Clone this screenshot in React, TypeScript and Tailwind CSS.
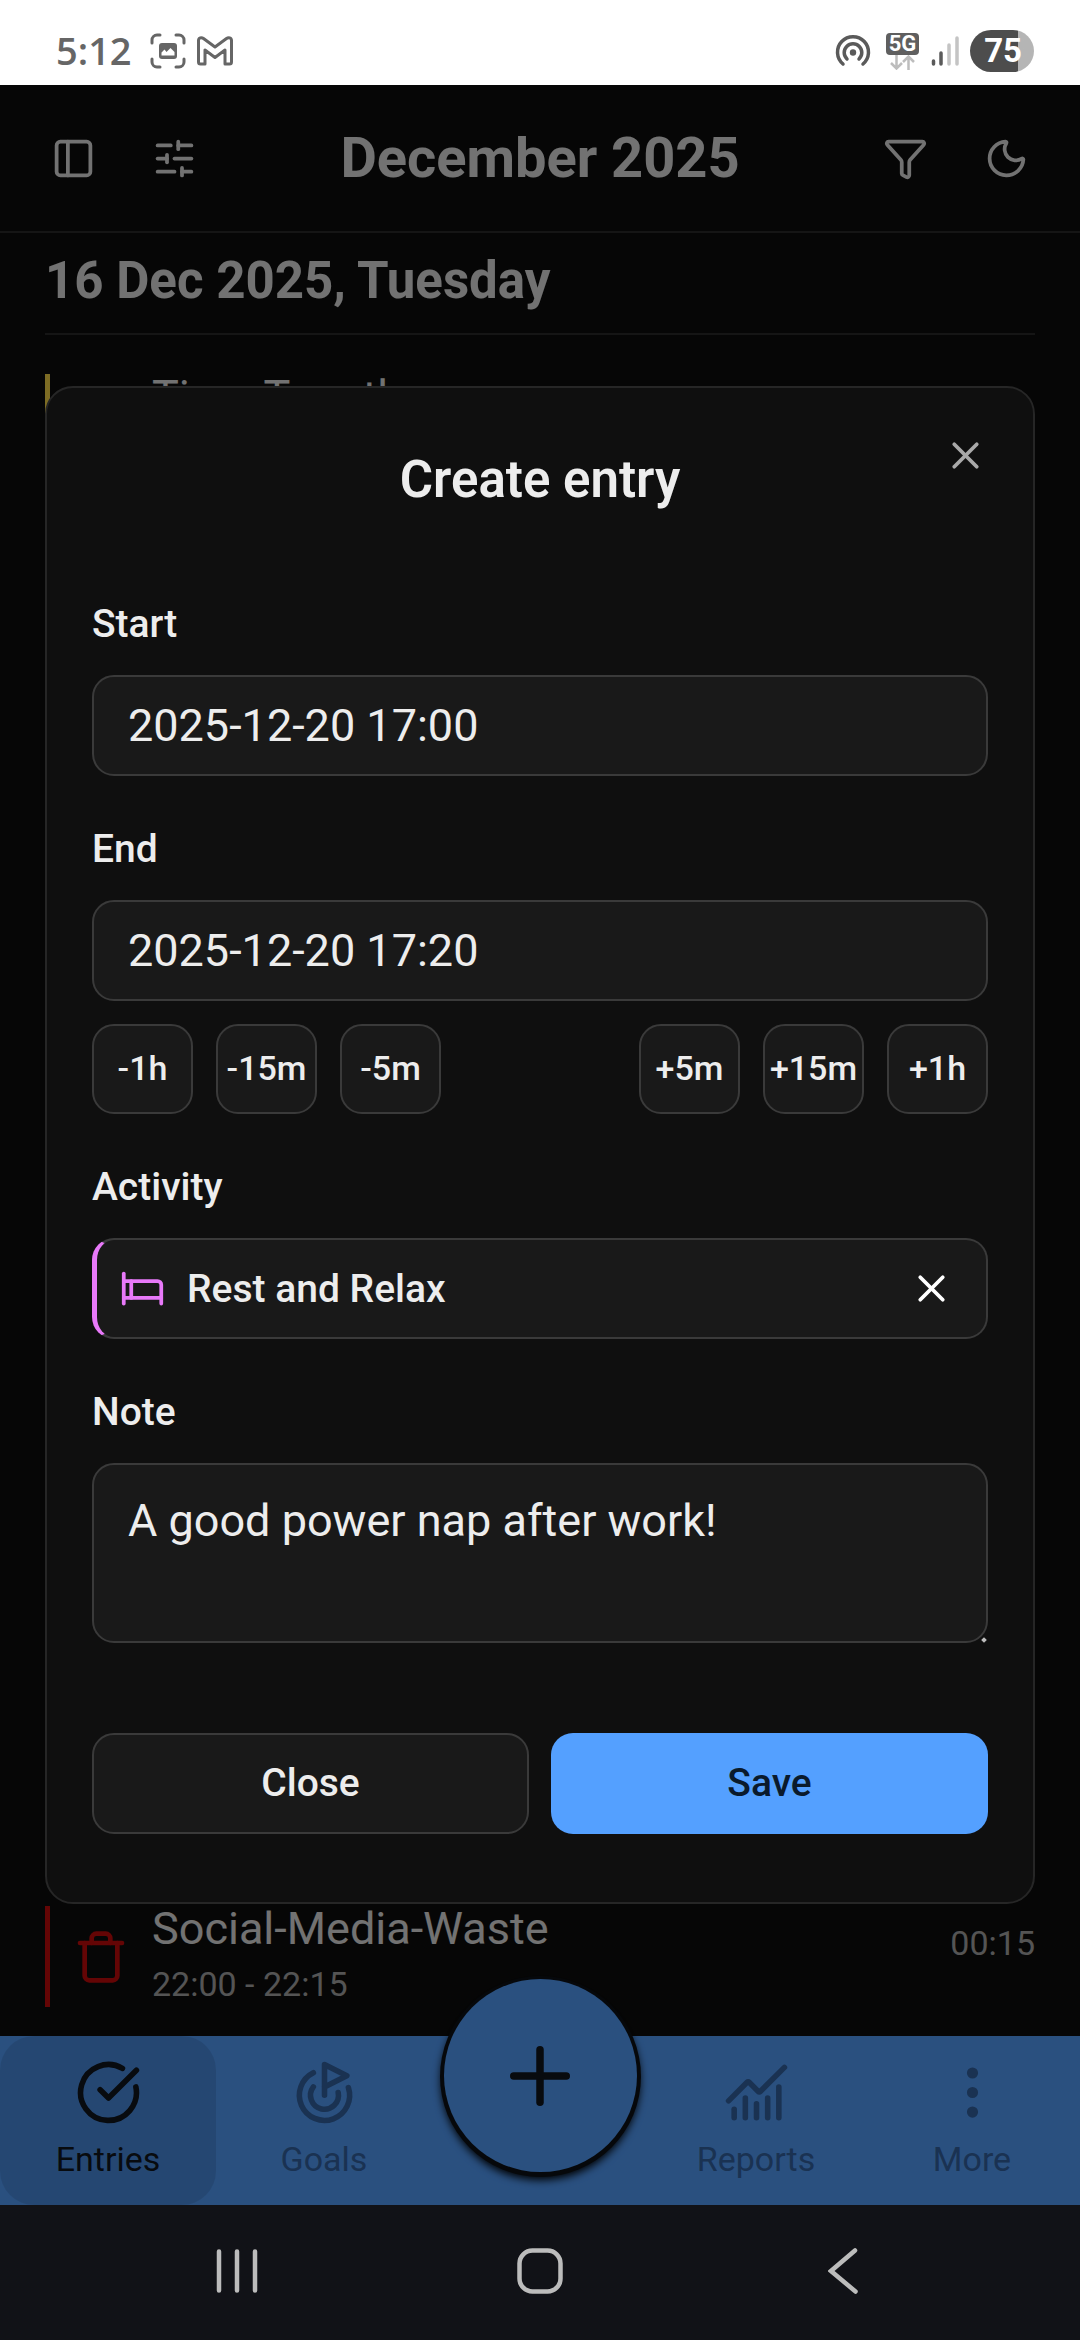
import React, { useState } from "react";
import {
  Bed,
  ChartNoAxesCombined,
  CircleCheckBig,
  EllipsisVertical,
  Funnel,
  Goal,
  Moon,
  PanelLeft,
  Plus,
  SlidersHorizontal,
  Trash,
  X,
} from "lucide-react";

const fieldBox = "w-full rounded-[22px] border-2 border-[#3a3a3a] bg-[#191919] text-[#ededed]";

function StatusBar() {
  return (
    <div className="flex h-[85px] items-center justify-between bg-white pl-[56px] pr-[46px] pt-[17px]">
      <div className="flex items-center">
        <span className="pb-[2px] font-['Open_Sans'] text-[38px] leading-[38px] font-semibold text-[#666666]">5:12</span>
        <svg className="ml-[18px] size-[36px]" viewBox="0 0 36 36" fill="none" stroke="#666666" strokeWidth="3" strokeLinecap="round" aria-hidden="true">
          <path d="M2 10V7a5 5 0 0 1 5-5h3M26 2h3a5 5 0 0 1 5 5v3M34 26v3a5 5 0 0 1-5 5h-3M10 34H7a5 5 0 0 1-5-5v-3" />
          <rect x="9" y="10" width="18" height="16" rx="3" fill="#666666" stroke="none" />
          <path d="M11.500 22.500v-3l3-3 2 2.500 4-4 4 4v3.500z" fill="#ffffff" stroke="none" />
        </svg>
        <svg className="ml-[11px] h-[30px] w-[36px]" viewBox="0 0 36 30" fill="none" stroke="#666666" strokeWidth="3" strokeLinejoin="round" aria-hidden="true">
          <path d="M1.500 26V4.500c0-3 3-3.500 5-2L18 11 29.500 2.500c2-1.500 5-1 5 2V26a2 2 0 0 1-2 2H28V14l-10 7.500L8 14v14H3.500a2 2 0 0 1-2-2z" />
        </svg>
      </div>
      <div className="flex items-center">
        <svg className="size-[36px]" viewBox="0 0 36 36" fill="none" stroke="#5a5a5a" strokeWidth="3.500" strokeLinecap="round" aria-hidden="true">
          <path d="M8 31a15.500 15.500 0 1 1 20 0" />
          <path d="M12 26a8.800 8.800 0 1 1 12 0" />
          <circle cx="18" cy="19.500" r="3.200" fill="#5a5a5a" stroke="none" />
        </svg>
        <div className="ml-[15px] flex flex-col items-center">
          <span className="flex h-[22px] w-[33px] items-center justify-center rounded-[4px] bg-[#5f5f5f] font-[Roboto] text-[22px] leading-[22px] font-bold text-white">5G</span>
          <svg className="h-[15px] w-[25px]" viewBox="0 0 25 15" fill="none" stroke="#bdbdbd" strokeWidth="2.500" aria-hidden="true">
            <path d="M6.500 0v13M1 8l5.500 5.500L12 8M18.500 15V2M13 7l5.500-5.500L24 7" />
          </svg>
        </div>
        <svg className="ml-[12px] h-[30px] w-[28px]" viewBox="0 0 28 30" strokeWidth="3.500" strokeLinecap="round" aria-hidden="true">
          <path d="M2.500 25v3M10 17v11" stroke="#5a5a5a" />
          <path d="M18 9v19M26 2v26" stroke="#c4c4c4" />
        </svg>
        <span className="ml-[11px] flex h-[42px] w-[64px] items-center justify-end rounded-full bg-linear-to-r from-[#4d4d4d] from-75% to-[#b5b5b5] to-75% pr-[12px] font-[Roboto] text-[33px] leading-[42px] font-bold text-white">
          75
        </span>
      </div>
    </div>
  );
}

function HeaderButton({ label, children }: { label: string; children: React.ReactNode }) {
  return (
    <button type="button" aria-label={label} className="flex size-[101px] items-center justify-center">
      {children}
    </button>
  );
}

function Entry({
  title,
  time,
  duration,
  bar,
  icon,
}: {
  title: string;
  time?: string;
  duration?: string;
  bar: string;
  icon?: React.ReactNode;
}) {
  return (
    <li className="flex h-[101px] items-center">
      <span className={`h-full w-[5px] shrink-0 ${bar}`} />
      <span className="mx-[23px] flex size-[56px] shrink-0 items-center justify-center">{icon}</span>
      <div className="flex h-full min-w-0 flex-1 flex-col gap-[11px]">
        <span className="text-[45px] leading-[45px] text-[#e4e4e4]">{title}</span>
        {time && <span className="text-[34px] leading-[45px] text-[#a8a8a8]">{time}</span>}
      </div>
      {duration && <span className="self-start pt-[15px] text-[34px] leading-[45px] text-[#a8a8a8]">{duration}</span>}
    </li>
  );
}

function Tab({ label, active, icon }: { label: string; active?: boolean; icon: React.ReactNode }) {
  return (
    <button
      type="button"
      aria-current={active ? "page" : undefined}
      className={`flex flex-col items-center gap-[11px] rounded-[34px] py-[23px] text-[34px] leading-[45px] ${
        active ? "bg-black/10 text-[#10171f]" : "text-[#3465a5]"
      }`}
    >
      {icon}
      {label}
    </button>
  );
}

function Field({ label, id, children }: { label: string; id: string; children: React.ReactNode }) {
  return (
    <div className="flex flex-col gap-[23px]">
      <label htmlFor={id} className="text-[39px] leading-[56px] font-medium">
        {label}
      </label>
      {children}
    </div>
  );
}

function StepButton({ children }: { children: React.ReactNode }) {
  return (
    <button
      type="button"
      className="flex h-[90px] w-[101px] items-center justify-center rounded-[22px] border-2 border-[#3a3a3a] bg-[#191919] pb-[2px] text-[34px] leading-[45px] font-medium"
    >
      {children}
    </button>
  );
}

function CreateEntryDialog() {
  const [start, setStart] = useState("2025-12-20 17:00");
  const [end, setEnd] = useState("2025-12-20 17:20");
  const [note, setNote] = useState("A good power nap after work!");

  return (
    <form
      role="dialog"
      aria-labelledby="dialog-title"
      className="relative flex w-full flex-col rounded-[28px] border-2 border-[#262626] bg-[#0f0f0f] px-[45px] py-[68px] text-[#ededed]"
    >
      <button type="button" aria-label="Close dialog" className="absolute top-[45px] right-[45px] text-[#a9a9a9]">
        <X className="size-[45px]" />
      </button>
      <h2 id="dialog-title" className="text-center text-[51px] leading-[48px] font-semibold">
        Create entry
      </h2>

      <div className="mt-[92px] flex flex-col gap-[45px]">
        <Field label="Start" id="start">
          <input id="start" value={start} onChange={(e) => setStart(e.target.value)} className={`${fieldBox} h-[101px] px-[34px] text-[45px]`} />
        </Field>

        <Field label="End" id="end">
          <input id="end" value={end} onChange={(e) => setEnd(e.target.value)} className={`${fieldBox} h-[101px] px-[34px] text-[45px]`} />
          <div className="flex justify-between">
            <div className="flex gap-[23px]">
              <StepButton>-1h</StepButton>
              <StepButton>-15m</StepButton>
              <StepButton>-5m</StepButton>
            </div>
            <div className="flex gap-[23px]">
              <StepButton>+5m</StepButton>
              <StepButton>+15m</StepButton>
              <StepButton>+1h</StepButton>
            </div>
          </div>
        </Field>

        <Field label="Activity" id="activity">
          <div className={`${fieldBox} flex h-[101px] items-center border-l-[5px] border-l-[#e879f9] pr-[32px] pl-[23px]`}>
            <button id="activity" type="button" className="flex flex-1 items-center gap-[22px] text-[39px] leading-[56px] font-medium">
              <Bed className="size-[45px] text-[#e879f9]" />
              Rest and Relax
            </button>
            <button type="button" aria-label="Clear activity" className="text-white">
              <X className="size-[45px]" />
            </button>
          </div>
        </Field>

        <Field label="Note" id="note">
          <div className="relative flex">
            <textarea
              id="note"
              value={note}
              onChange={(e) => setNote(e.target.value)}
              className={`${fieldBox} h-[180px] resize-none px-[34px] py-[22px] text-[45px] leading-[68px]`}
            />
            <span className="absolute right-[2px] bottom-[1px] size-[4px] rotate-45 bg-[#bdbdbd]" />
          </div>
        </Field>
      </div>

      <div className="mt-[90px] grid grid-cols-2 gap-[22px]">
        <button type="button" className={`${fieldBox} h-[101px] pb-[2px] text-[39px] leading-[56px] font-medium`}>
          Close
        </button>
        <button type="button" className="h-[101px] rounded-[22px] bg-[#54a0ff] pb-[2px] text-[39px] leading-[56px] font-medium text-[#0a1a2c]">
          Save
        </button>
      </div>
    </form>
  );
}

export default function App() {
  return (
    <div className="flex min-h-screen flex-col bg-[#111217] font-[Roboto,sans-serif]">
      <StatusBar />

      <div className="relative flex flex-1 flex-col bg-[#0d0d0d] text-[#ededed]">
        <header className="flex h-[148px] items-center border-b-2 border-[#2a2a2a] px-[23px] text-[#e4e4e4]">
          <HeaderButton label="Toggle sidebar">
            <PanelLeft className="size-[45px]" />
          </HeaderButton>
          <HeaderButton label="View settings">
            <SlidersHorizontal className="size-[45px]" />
          </HeaderButton>
          <h1 className="flex-1 text-center text-[56px] leading-[68px] font-bold">December 2025</h1>
          <HeaderButton label="Filter">
            <Funnel className="size-[45px]" />
          </HeaderButton>
          <HeaderButton label="Dark mode">
            <Moon className="size-[45px]" />
          </HeaderButton>
        </header>

        <main className="flex flex-1 flex-col px-[45px] pb-[29px]">
          <h2 className="border-b-2 border-[#2a2a2a] pt-[20px] pb-[24px] text-[51px] leading-[56px] font-bold text-[#e4e4e4]">
            16 Dec 2025, Tuesday
          </h2>
          <ul className="flex flex-1 flex-col justify-between pt-[39px]">
            <Entry title="Time Together" bar="bg-[#fad848]" />
            <Entry
              title="Social-Media-Waste"
              time="22:00 - 22:15"
              duration="00:15"
              bar="bg-[#c80a0a]"
              icon={<Trash className="size-[56px] text-[#c80a0a]" />}
            />
          </ul>
        </main>

        <nav className="grid grid-cols-5 bg-[#54a0ff]">
          <Tab label="Entries" active icon={<CircleCheckBig className="size-[67px]" />} />
          <Tab label="Goals" icon={<Goal className="size-[67px]" />} />
          <div className="relative flex justify-center">
            <button
              type="button"
              aria-label="Add entry"
              className="absolute -top-[57px] flex size-[193px] items-center justify-center rounded-full bg-[#54a0ff] text-[#10171f] shadow-[0_1px_0_4px_#0d1116,0_5px_8px_3px_#000000]"
            >
              <Plus className="size-[90px]" />
            </button>
          </div>
          <Tab label="Reports" icon={<ChartNoAxesCombined className="size-[67px]" />} />
          <Tab label="More" icon={<EllipsisVertical className="size-[67px]" />} />
        </nav>

        <div className="absolute inset-0 flex items-center justify-center bg-black/50 px-[45px]">
          <CreateEntryDialog />
        </div>
      </div>

      <div className="grid h-[135px] grid-cols-3 px-[86px] pb-[3px] text-[#bcbcbc]">
        <button type="button" aria-label="Recent apps" className="flex items-center justify-center">
          <svg className="h-[46px] w-[42px]" viewBox="0 0 42 46" stroke="currentColor" strokeWidth="4.500" strokeLinecap="round">
            <path d="M3 3.500v39M21 3.500v39M39 3.500v39" />
          </svg>
        </button>
        <button type="button" aria-label="Home" className="flex items-center justify-center">
          <svg className="size-[46px]" viewBox="0 0 46 46" fill="none" stroke="currentColor" strokeWidth="4.500">
            <rect x="2.500" y="2.500" width="41" height="41" rx="13" />
          </svg>
        </button>
        <button type="button" aria-label="Back" className="flex items-center justify-center">
          <svg className="h-[46px] w-[30px]" viewBox="0 0 30 46" fill="none" stroke="currentColor" strokeWidth="4.500" strokeLinecap="round">
            <path d="M27 2.500 3 23l24.500 20.500" />
          </svg>
        </button>
      </div>
    </div>
  );
}
